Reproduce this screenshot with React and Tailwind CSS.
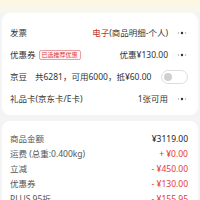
function Dots() {
  return (
    <svg width="10" height="4" viewBox="0 0 10 4" className="ml-[9px] shrink-0">
      <circle cx="1.5" cy="2" r="0.8" fill="#aaa" />
      <circle cx="5" cy="2" r="1.2" fill="#333" />
      <circle cx="8.5" cy="2" r="0.8" fill="#aaa" />
    </svg>
  );
}

function Row({ label, children }) {
  return (
    <div className="flex h-[22px] items-center justify-between">
      <div className="flex items-center">{label}</div>
      <div className="flex items-center">{children}</div>
    </div>
  );
}

function PriceRow({ label, value, red }) {
  return (
    <div className="flex h-[15px] items-center justify-between">
      <span className="text-[#555]">{label}</span>
      <span className={red ? "text-[#e4393c]" : "text-[#222]"}>{value}</span>
    </div>
  );
}

export default function App() {
  return (
    <div
      className="h-[200px] w-[200px] overflow-hidden bg-[#f4f4f4] text-[8.5px] leading-none"
      style={{ fontFamily: '"Noto Sans", "Noto Sans CJK SC", sans-serif' }}
    >
      <div className="h-[13px] bg-gradient-to-b from-[#fdf7df] to-[#f7f6f1]" />
      <div className="mx-[2px] rounded-lg bg-white pl-[8px] pr-[11px] pt-[9px] pb-[5px]">
        <Row label={<span className="text-[#333]">发票</span>}>
          <span className="text-[#c0392b]">电子</span>
          <span className="text-[#333]">(商品明细-个人)</span>
          <Dots />
        </Row>
        <Row
          label={
            <>
              <span className="text-[#333]">优惠券</span>
              <span className="ml-[3px] rounded-[2px] border border-[#e8a0a0] bg-[#fff3f3] px-[2px] py-[1px] text-[6px] text-[#e4393c]">
                已选推荐优惠
              </span>
            </>
          }
        >
          <span className="text-[#333]">优惠¥130.00</span>
          <Dots />
        </Row>
        <Row
          label={
            <>
              <span className="w-[25px] text-[#333]">京豆</span>
              <span className="text-[#333]">共6281，可用6000，抵¥60.00</span>
            </>
          }
        >
          <div className="mr-[-1px] flex h-[14px] w-[27px] items-center rounded-full border border-[#ddd] bg-white px-[2px]">
            <div className="h-[8px] w-[8px] rounded-full bg-[#d0d0d0]" />
          </div>
        </Row>
        <Row label={<span className="text-[#333]">礼品卡(京东卡/E卡)</span>}>
          <span className="text-[#333]">1张可用</span>
          <Dots />
        </Row>
      </div>
      <div className="mx-[2px] mt-[6px] rounded-lg bg-white pl-[8px] pr-[10px] pt-[11px]">
        <PriceRow label="商品金额" value="¥3119.00" />
        <PriceRow label="运费 (总重:0.400kg)" value="+ ¥0.00" red />
        <PriceRow label="立减" value="- ¥450.00" red />
        <PriceRow label="优惠券" value="- ¥130.00" red />
        <PriceRow label="PLUS 95折" value="- ¥155.95" red />
      </div>
    </div>
  );
}
